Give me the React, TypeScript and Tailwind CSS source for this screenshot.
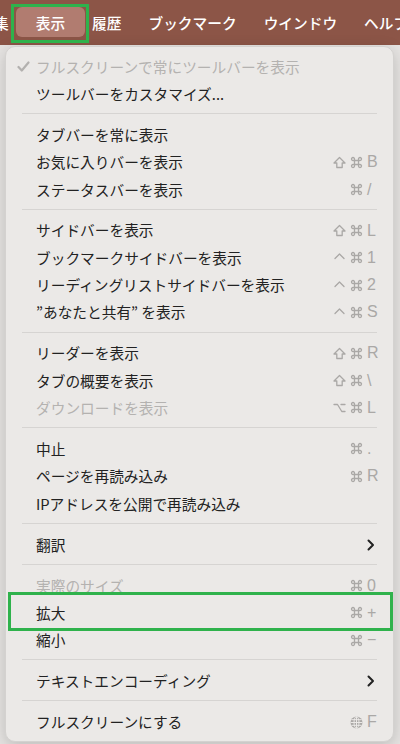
import React from 'react';

type Mod = 'shift' | 'cmd' | 'ctrl' | 'opt';

type Item =
  | { kind: 'sep' }
  | {
      kind: 'item';
      label: string;
      mods?: Mod[];
      keyChar?: string;
      disabled?: boolean;
      checked?: boolean;
      submenu?: boolean;
      globe?: boolean;
      highlight?: boolean;
    };

const items: Item[] = [
  { kind: 'item', label: 'フルスクリーンで常にツールバーを表示', disabled: true, checked: true },
  { kind: 'item', label: 'ツールバーをカスタマイズ...' },
  { kind: 'sep' },
  { kind: 'item', label: 'タブバーを常に表示' },
  { kind: 'item', label: 'お気に入りバーを表示', mods: ['shift', 'cmd'], keyChar: 'B' },
  { kind: 'item', label: 'ステータスバーを表示', mods: ['cmd'], keyChar: '/' },
  { kind: 'sep' },
  { kind: 'item', label: 'サイドバーを表示', mods: ['shift', 'cmd'], keyChar: 'L' },
  { kind: 'item', label: 'ブックマークサイドバーを表示', mods: ['ctrl', 'cmd'], keyChar: '1' },
  { kind: 'item', label: 'リーディングリストサイドバーを表示', mods: ['ctrl', 'cmd'], keyChar: '2' },
  { kind: 'item', label: '”あなたと共有” を表示', mods: ['ctrl', 'cmd'], keyChar: 'S' },
  { kind: 'sep' },
  { kind: 'item', label: 'リーダーを表示', mods: ['shift', 'cmd'], keyChar: 'R' },
  { kind: 'item', label: 'タブの概要を表示', mods: ['shift', 'cmd'], keyChar: '\\' },
  { kind: 'item', label: 'ダウンロードを表示', disabled: true, mods: ['opt', 'cmd'], keyChar: 'L' },
  { kind: 'sep' },
  { kind: 'item', label: '中止', mods: ['cmd'], keyChar: '.' },
  { kind: 'item', label: 'ページを再読み込み', mods: ['cmd'], keyChar: 'R' },
  { kind: 'item', label: 'IPアドレスを公開で再読み込み' },
  { kind: 'sep' },
  { kind: 'item', label: '翻訳', submenu: true },
  { kind: 'sep' },
  { kind: 'item', label: '実際のサイズ', disabled: true, mods: ['cmd'], keyChar: '0' },
  { kind: 'item', label: '拡大', mods: ['cmd'], keyChar: '+', highlight: true },
  { kind: 'item', label: '縮小', mods: ['cmd'], keyChar: '−' },
  { kind: 'sep' },
  { kind: 'item', label: 'テキストエンコーディング', submenu: true },
  { kind: 'sep' },
  { kind: 'item', label: 'フルスクリーンにする', globe: true, keyChar: 'F' },
];

const GREY = '#aaa8a6';

const modPaths: Record<Mod, string> = {
  shift: 'M6.5 1.5 L12 7 H9.2 V11.5 H3.8 V7 H1 Z',
  cmd: 'M4.5 4.5 V3 A1.5 1.5 0 1 0 3 4.5 H10 A1.5 1.5 0 1 0 8.5 3 V10 A1.5 1.5 0 1 0 10 8.5 H3 A1.5 1.5 0 1 0 4.5 10 Z',
  ctrl: 'M2 7.5 L6.5 3 L11 7.5',
  opt: 'M1 3.5 H4.5 L8.8 10.5 H12 M8 3.5 H12',
};

const ModIcon = ({ m }: { m: Mod }) => (
  <svg width="13" height="13" viewBox="0 0 13 13" fill="none">
    <path d={modPaths[m]} stroke={GREY} strokeWidth="1.3" strokeLinejoin="round" strokeLinecap="round" />
  </svg>
);

const Check = () => (
  <svg width="13" height="11" viewBox="0 0 13 11" fill="none">
    <path d="M1.5 6 L4.8 9.5 L11.5 1.5" stroke="#b3b1af" strokeWidth="2.2" strokeLinecap="round" strokeLinejoin="round" />
  </svg>
);

const Chevron = () => (
  <svg width="8" height="12" viewBox="0 0 8 12" fill="none">
    <path d="M1.5 1.5 L6 6 L1.5 10.5" stroke="#222" strokeWidth="2" strokeLinecap="round" strokeLinejoin="round" />
  </svg>
);

const Globe = () => (
  <svg width="13" height="13" viewBox="0 0 12 12" fill="none" strokeWidth="0.9">
    <circle cx="6" cy="6" r="5.5" fill={GREY} />
    <ellipse cx="6" cy="6" rx="2.3" ry="5.5" stroke="#ebe9e7" />
    <path d="M6 0.5 V11.5 M0.5 6 H11.5 M1.3 3.4 H10.7 M1.3 8.6 H10.7" stroke="#ebe9e7" />
  </svg>
);

export default function App() {
  return (
    <div
      className="w-[400px] h-[744px] overflow-hidden bg-[#e6e4e2]"
      style={{ fontFamily: '"Noto Sans CJK JP", "Noto Sans", sans-serif' }}
    >
      {/* menu bar */}
      <div className="h-[45px] bg-[#8c5547] flex items-center gap-[27px] text-white text-[14.7px] font-medium leading-[20px] whitespace-nowrap">
        <span className="-ml-[6px]">集</span>
        <span className="relative">
          <span className="absolute -left-[20px] -right-[20px] -top-[6px] -bottom-[4px] rounded-[6px] bg-[#b17c70]" />
          <span className="absolute -left-[25px] -right-[24px] -top-[9px] -bottom-[10px] border-[3px] border-[#2fb24c]" />
          <span className="relative">表示</span>
        </span>
        <span>履歴</span>
        <span>ブックマーク</span>
        <span>ウインドウ</span>
        <span>ヘルプ</span>
      </div>

      {/* menu */}
      <div className="ml-[5px] mt-[1px] w-[389px] rounded-[10px] border border-[#d4d2d0] bg-[#ebe9e7] pt-[6px] pb-[5px] shadow-[0_4px_16px_rgba(0,0,0,0.18)]">
        {items.map((it, i) => {
          if (it.kind === 'sep') {
            return (
              <div key={i} className="pt-[5.5px] pb-[7.2px]">
                <div className="mx-[16px] h-px bg-[#d6d4d2]" />
              </div>
            );
          }
          return (
            <div key={i} className="relative h-[27.3px] flex items-center pr-[14px] text-[14.7px]">
              {it.highlight && (
                <div className="absolute left-[2px] right-0 -top-[7px] -bottom-[5px] border-[3px] border-[#2fb24c]" />
              )}
              <div className="w-[30px] shrink-0 pl-[11px] flex items-center">{it.checked && <Check />}</div>
              <div className={`flex-1 whitespace-nowrap ${it.disabled ? 'text-[#b4b2b0]' : 'text-[#222222]'}`}>
                {it.label}
              </div>
              {(it.mods || it.keyChar || it.submenu || it.globe) && (
                <div className="flex items-center text-[#aaa8a6] text-[16px]">
                  {it.globe && (
                    <span className="w-[13px] mr-[4px] flex justify-center">
                      <Globe />
                    </span>
                  )}
                  {it.mods?.map((m, j) => (
                    <span key={j} className="w-[13px] mr-[4px] flex justify-center">
                      <ModIcon m={m} />
                    </span>
                  ))}
                  <span className="w-[12px] flex items-center" style={{ fontFamily: '"Liberation Sans", Arial, sans-serif' }}>
                    {it.submenu ? <Chevron /> : it.keyChar}
                  </span>
                </div>
              )}
            </div>
          );
        })}
      </div>
    </div>
  );
}
